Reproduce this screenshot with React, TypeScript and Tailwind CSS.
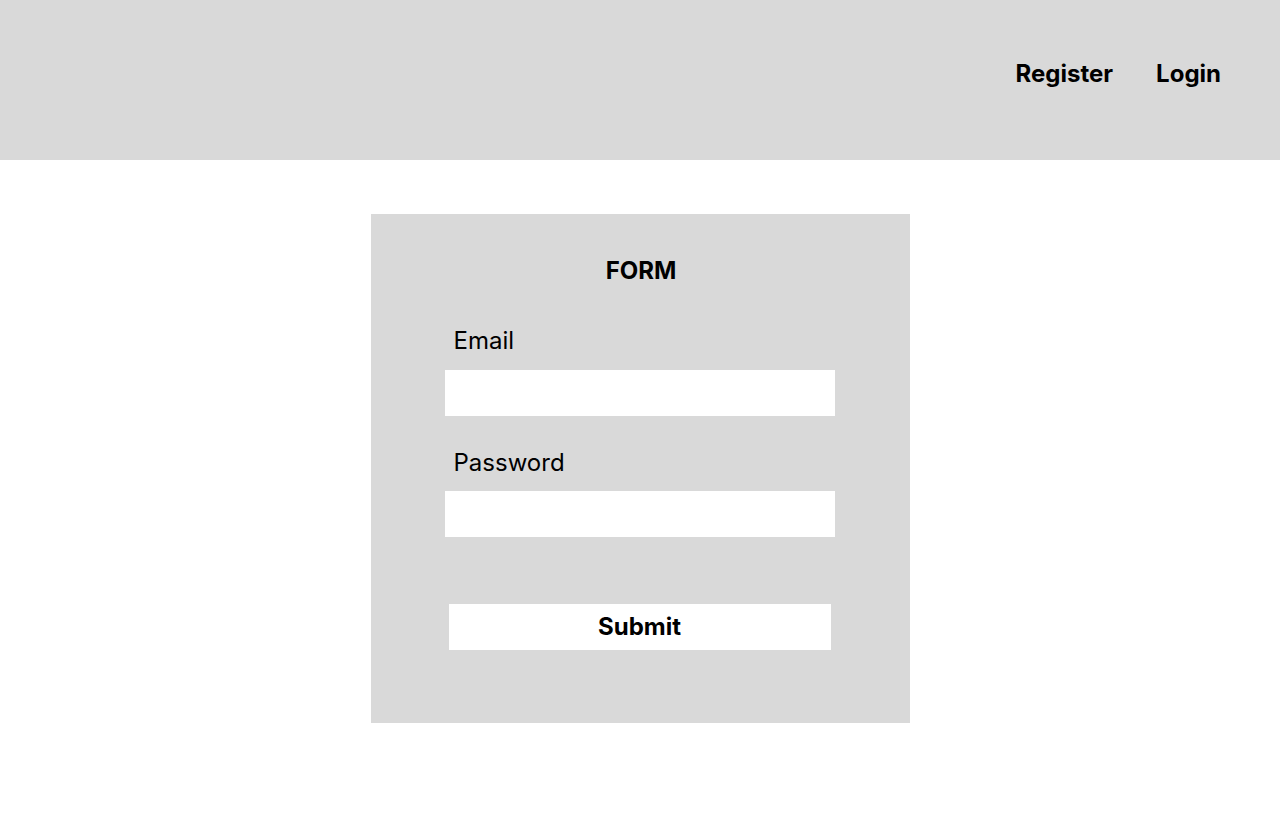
export default function App() {
    return (
        <div className="min-h-[832px] bg-white text-black font-['Inter',sans-serif]">
            <header className="h-[160px] bg-[#d9d9d9] flex justify-end items-start pt-[58px] pr-[59px] gap-[43px]">
                <a className="text-2xl font-bold leading-8 cursor-pointer">Register</a>
                <a className="text-2xl font-bold leading-8 cursor-pointer">Login</a>
            </header>

            <main className="pt-[54px]">
                <form
                    className="mx-auto w-[539px] h-[509px] bg-[#d9d9d9] pt-[41px] pl-[74px] pr-[75px] flex flex-col"
                    onSubmit={(e) => e.preventDefault()}
                >
                    <h1 className="text-2xl font-bold leading-8 text-center pl-[3px]">FORM</h1>

                    <label htmlFor="email" className="mt-[38px] pl-[9px] text-2xl leading-8">
                        Email
                    </label>
                    <input id="email" type="email" className="mt-[13px] h-[46px] w-full bg-white outline-none px-3" />

                    <label htmlFor="password" className="mt-[31px] pl-[9px] text-2xl leading-8">
                        Password
                    </label>
                    <input id="password" type="password" className="mt-3 h-[46px] w-full bg-white outline-none px-3" />

                    <button
                        type="submit"
                        className="mt-[67px] mx-1 h-[46px] bg-white text-2xl font-bold leading-8"
                    >
                        Submit
                    </button>
                </form>
            </main>
        </div>
    );
}
